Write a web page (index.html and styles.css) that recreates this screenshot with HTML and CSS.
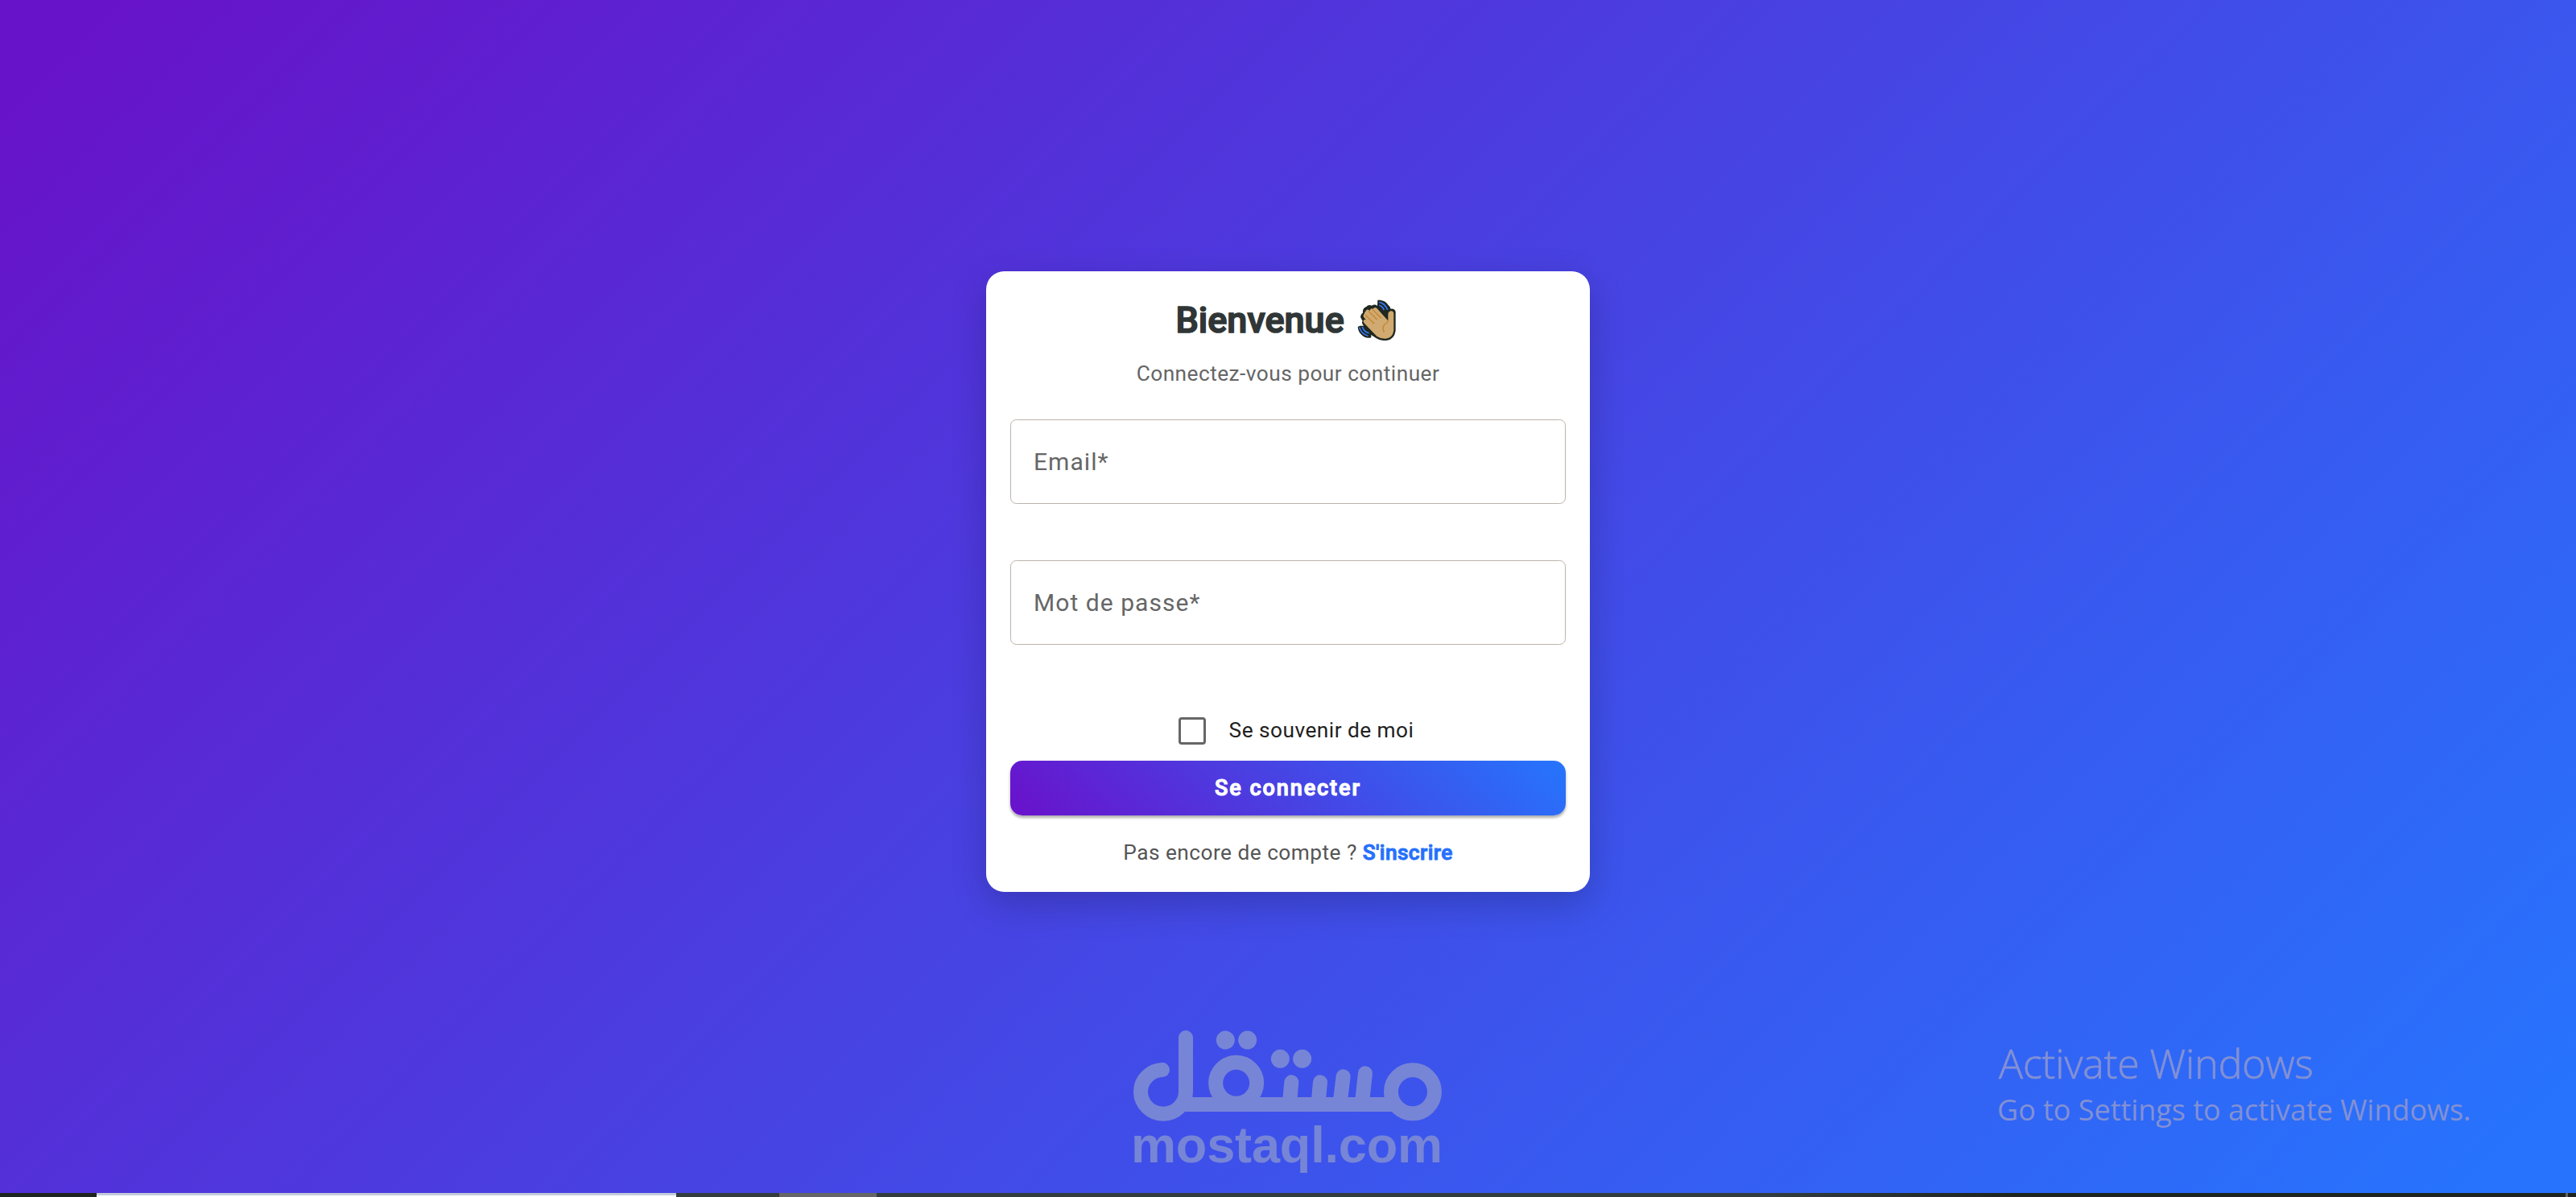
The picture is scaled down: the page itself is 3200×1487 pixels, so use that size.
FILE: index.html
```html
<!DOCTYPE html>
<html lang="fr">
<head>
<meta charset="utf-8">
<title>Connexion</title>
<link rel="stylesheet" href="styles.css">
</head>
<body>
<main class="page">
  <form class="card">
    <h1 class="title">Bienvenue <svg class="wave" viewBox="78 64 146 154" aria-hidden="true">
      <path class="wave-ink" d="M154 66C172 65 186 72 193 84Q203 92 202 99Q218 97 221 110V181Q216 214 187 217Q164 219 148 208L130 196V206Q111 212 95 197Q81 184 80 166L88 162H102Q92 151 98 145L90 130Q91 118 99 114Q97 96 112 91Q119 82 132 87Q143 80 153 88Z"/>
      <path class="wave-skin" d="M109 108Q115 96 125 106Q127 94 137 99Q143 89 152 98L187 137L193 143V119Q194 108 204 107Q214 107 214 118V180Q210 207 184 210Q165 211 151 201L111 160Q99 149 101 143Q105 137 112 141L102 130Q98 123 104 118Q105 111 109 108Z"/>
      <path class="wave-fold" d="M121 109L151 138M137 103L165 132M110 124L140 153M192 144L190 150Q172 160 174 174L177 185"/>
      <path class="wave-motion" d="M160 74Q181 78 191 103M160 86Q173 90 178 104M86 168Q92 191 118 200M97 166Q102 184 122 190"/>
    </svg></h1>
    <p class="subtitle">Connectez-vous pour continuer</p>
    <label class="field">Email*</label>
    <label class="field field-next">Mot de passe*</label>
    <div class="remember">
      <span class="checkbox"></span>
      <span class="remember-label">Se souvenir de moi</span>
    </div>
    <button class="submit" type="button">Se connecter</button>
    <p class="signup">Pas encore de compte ? <a class="signup-link">S'inscrire</a></p>
  </form>
</main>
<footer class="taskbar">
  <span class="task-active"></span>
  <span class="task-hover"></span>
  <span class="task-end"></span>
</footer>
<div class="brand">
  <svg class="brand-mark" viewBox="54 60 1150 338" aria-hidden="true">
    <g fill="none" stroke="currentColor" stroke-width="54">
      <circle cx="1095" cy="289" r="81"/>
      <circle cx="437" cy="256" r="76.5"/>
      <path d="M225 336H1040"/>
      <path stroke-linecap="round" d="M249 87V289A84 82 0 0 1 81 289A84 82 0 0 1 162 207"/>
      <path stroke-linecap="round" d="M643 253L636 330M750 253L743 330M836 232L824 330M918 220L906 330"/>
    </g>
    <g fill="currentColor">
      <circle cx="397" cy="96" r="34.5"/><circle cx="479" cy="96" r="34.5"/>
      <circle cx="601" cy="166" r="34.5"/><circle cx="683" cy="166" r="34.5"/>
    </g>
  </svg>
  <span class="brand-name">mostaql.com</span>
</div>
<div class="activation">
  <div class="activation-title">Activate Windows</div>
  <div class="activation-text">Go to Settings to activate Windows.</div>
</div>
</body>
</html>
```
FILE: styles.css
```css
* { box-sizing: border-box; }

body {
  margin: 0;
  height: 1487px;
  display: flex;
  flex-direction: column;
  position: relative;
  overflow: hidden;
  font-family: Roboto, "Liberation Sans", sans-serif;
}

.page {
  flex: 1;
  display: flex;
  justify-content: center;
  align-items: flex-start;
  padding-top: 337px;
  background: linear-gradient(135deg, #6713c9 3%, #2773fd 97%);
}

.card {
  width: 750px;
  height: 771px;
  padding: 30px 30px 26px;
  background: #fff;
  border-radius: 22.5px;
  box-shadow: 0 15px 45px rgba(0, 0, 0, 0.2);
  text-align: center;
}

.title {
  margin: 0;
  font-size: 45px;
  font-weight: 500;
  line-height: 61px;
  height: 63px;
  -webkit-text-stroke: 1.6px #303636;
  white-space: nowrap;
  color: #303636;
}

.wave {
  width: 48.7px;
  height: 51.3px;
  margin: 0 5px;
  vertical-align: -10px;
  -webkit-text-stroke: 0;
}

.wave-ink { fill: #20281f; }
.wave-skin { fill: #d0aa70; }
.wave-fold { fill: none; stroke: #c88a3a; stroke-width: 5; stroke-linecap: round; }
.wave-motion { fill: none; stroke: #347aff; stroke-width: 5; }

.subtitle {
  margin: 11px 0 34px;
  font-size: 26.25px;
  line-height: 46px;
  letter-spacing: 0.47px;
  color: #666;
}

.field {
  display: flex;
  align-items: center;
  height: 105px;
  padding: 0 28px;
  border: 1px solid #bab5ac;
  border-radius: 7.5px;
  font-size: 30px;
  letter-spacing: 1.05px;
  color: #666;
}

.field-next { margin-top: 70px; }

.remember {
  display: flex;
  justify-content: center;
  align-items: center;
  height: 75px;
  margin-top: 69px;
}

.checkbox {
  width: 34px;
  height: 34px;
  margin: 0 20.5px;
  border: 3px solid #666;
  border-radius: 4px;
}

.remember-label {
  padding: 0 0 2px 8px;
  font-size: 26.25px;
  letter-spacing: 0.47px;
  color: #212121;
}

.submit {
  display: block;
  width: 100%;
  height: 68px;
  padding: 0 0 1px;
  border: 0;
  border-radius: 15px;
  background: linear-gradient(45deg, #6a11cb, #2575fc);
  box-shadow: 0 3px 3px rgba(0, 0, 0, 0.24), 0 2px 5px rgba(0, 0, 0, 0.12);
  font-family: inherit;
  font-size: 27px;
  font-weight: 500;
  letter-spacing: 1.95px;
  -webkit-text-stroke: 1.1px #fff;
  color: #fff;
}

.signup {
  margin: 23px 0 0;
  font-size: 26.25px;
  line-height: 46px;
  letter-spacing: 0.47px;
  color: #555;
}

.signup-link {
  font-weight: 500;
  letter-spacing: 0.4px;
  -webkit-text-stroke: 1px #2670fc;
  color: #2670fc;
}

.taskbar {
  display: flex;
  height: 5px;
  padding-left: 120px;
  background: linear-gradient(90deg, #1e251f 0, #1e251f 120px, #343d3d 840px, #343d3d 2200px, #1e251f 2500px);
}

.task-active {
  width: 720px;
  background: #fff;
  border-top: 3px solid #c3cbdc;
}

.task-hover {
  width: 121px;
  margin-left: 128px;
  background: #666;
}

.task-end {
  width: 3px;
  margin: 0 10px 0 auto;
  background: #666;
}

/* Overlays above the desktop */
.brand {
  position: absolute;
  left: 1408px;
  top: 1280px;
  width: 384px;
  color: #7785d6;
}

.brand-mark {
  display: block;
  width: 383.3px;
  height: 112.7px;
}

.brand-name {
  display: block;
  margin: -7px 0 0 -3px;
  font: 700 63px/72px "Liberation Sans", sans-serif;
  letter-spacing: -0.15px;
  white-space: nowrap;
}

.activation {
  position: absolute;
  left: 2483px;
  top: 1291px;
  font-family: "Open Sans", "Noto Sans", sans-serif;
  white-space: nowrap;
  color: #8390d4;
}

.activation-title {
  font-size: 50px;
  font-weight: 300;
  line-height: 60px;
  letter-spacing: -0.1px;
  -webkit-text-stroke: 0.7px #8390d4;
}

.activation-text {
  margin-left: -2px;
  font-size: 36px;
  line-height: 56px;
  letter-spacing: -0.04px;
}
```
